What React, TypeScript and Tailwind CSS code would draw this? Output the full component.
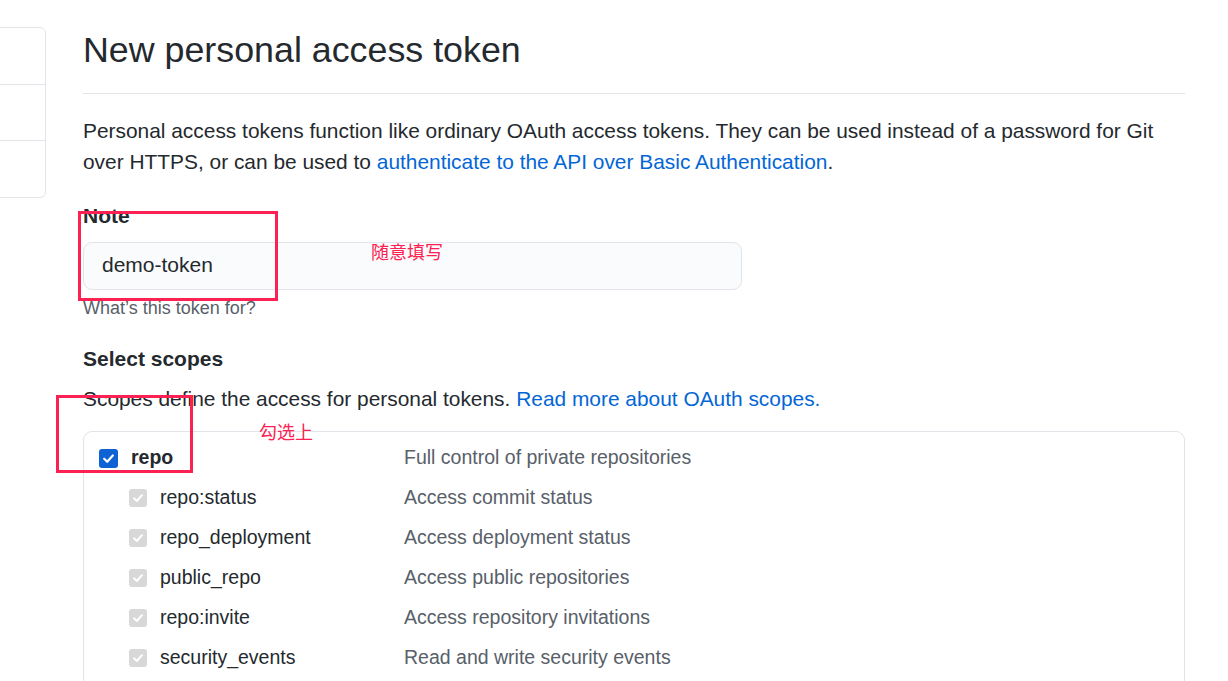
import React from "react";

const Check = ({ size = 12 }: { size?: number }) => (
  <svg width={size} height={size} viewBox="0 0 12 12" fill="none">
    <path d="M2 6.3 L4.8 9 L10 3.2" stroke="white" strokeWidth="2" strokeLinecap="round" strokeLinejoin="round" />
  </svg>
);

const subs: [string, string][] = [
  ["repo:status", "Access commit status"],
  ["repo_deployment", "Access deployment status"],
  ["public_repo", "Access public repositories"],
  ["repo:invite", "Access repository invitations"],
  ["security_events", "Read and write security events"],
];

export default function App() {
  return (
    <div
      className="relative h-[681px] w-[1228px] overflow-hidden bg-white text-[#24292e]"
      style={{ fontFamily: '"Liberation Sans", Arial, "Noto Sans CJK SC", sans-serif' }}
    >
      <div className="flex pt-[27px]">
        {/* sidebar */}
        <div className="ml-[-12px] flex h-[171px] w-[58px] shrink-0 flex-col rounded-[6px] border border-[#e1e4e8]">
          <div className="h-[57px] border-b border-[#e1e4e8]" />
          <div className="h-[56px] border-b border-[#e1e4e8]" />
          <div className="flex-1" />
        </div>

        {/* main */}
        <div className="ml-[37px] w-[1102px] shrink-0">
          <h1 className="mt-[1px] border-b border-[#e1e4e8] pb-[20px] text-[35.8px] leading-[45px] font-normal">
            New personal access token
          </h1>
          <p className="mt-[21px] text-[20.9px] leading-[31px]">
            Personal access tokens function like ordinary OAuth access tokens. They can be used instead of a password for Git
            over HTTPS, or can be used to{" "}
            <span className="text-[#0366d6]">authenticate to the API over Basic Authentication</span>.
          </p>

          <div className="mt-[23px] text-[21px] leading-[31px] font-bold">Note</div>
          <div className="mt-[11px] flex h-[48px] w-[659px] items-center rounded-[9px] border border-[#e1e4e8] bg-[#fafbfc] pb-[3px] pl-[18px] text-[21px]">
            demo-token
          </div>
          <div className="mt-[5px] text-[18px] leading-[27px] text-[#586069]">What’s this token for?</div>

          <div className="mt-[21px] text-[21px] leading-[31px] font-bold">Select scopes</div>
          <p className="mt-[9px] text-[20.9px] leading-[31px]">
            Scopes define the access for personal tokens.{" "}
            <span className="text-[#0366d6]">Read more about OAuth scopes.</span>
          </p>

          <div className="mt-[17px] rounded-[9px] border border-[#e1e4e8] pt-[6px] pb-[20px]">
            <div className="flex h-[40px] items-center text-[19.5px]">
              <div className="flex w-[320px] items-center pl-[15px]">
                <div className="flex h-[19px] w-[19px] items-center justify-center rounded-[3px] bg-[#0f62d3]">
                  <Check size={13} />
                </div>
                <span className="ml-[13px] font-bold">repo</span>
              </div>
              <span className="text-[#586069]">Full control of private repositories</span>
            </div>
            {subs.map(([k, d]) => (
              <div key={k} className="flex h-[40px] items-center text-[19.5px]">
                <div className="flex w-[320px] items-center pl-[45px]">
                  <div className="flex h-[18px] w-[18px] items-center justify-center rounded-[3px] bg-[#d8d8d8]">
                    <Check size={12} />
                  </div>
                  <span className="ml-[13px]">{k}</span>
                </div>
                <span className="text-[#586069]">{d}</span>
              </div>
            ))}
          </div>
        </div>
      </div>

      {/* annotations */}
      <div className="absolute left-[78px] top-[211px] h-[90px] w-[200px] border-[3px] border-[#fb2152]" />
      <div className="absolute left-[371px] top-[241px] text-[18px] leading-[24px] text-[#fb2152]">随意填写</div>
      <div className="absolute left-[56px] top-[395px] h-[78px] w-[137px] border-[3px] border-[#fb2152]" />
      <div className="absolute left-[259px] top-[421px] text-[18px] leading-[24px] text-[#fb2152]">勾选上</div>
    </div>
  );
}
